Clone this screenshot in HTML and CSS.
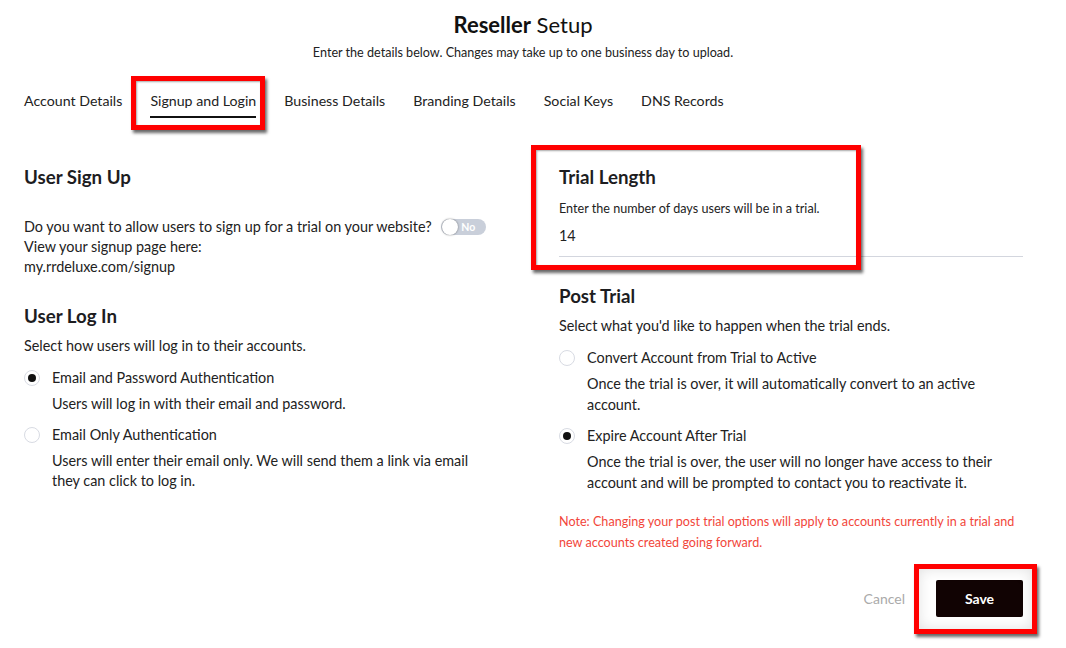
FILE: index.html
```html
<!DOCTYPE html>
<html lang="en">
<head>
  <meta charset="UTF-8">
  <meta name="viewport" content="width=device-width, initial-scale=1.0">
  <title>Reseller Setup</title>
  <link rel="stylesheet" href="styles.css">
</head>
<body>
  <h1 class="title"><b>Reseller</b> Setup</h1>
  <p class="subtitle">Enter the details below. Changes may take up to one business day to upload.</p>

  <nav class="tabs">
    <a class="tab">Account Details</a>
    <a class="tab active">Signup and Login<span class="mark mark-tab"></span></a>
    <a class="tab">Business Details</a>
    <a class="tab">Branding Details</a>
    <a class="tab">Social Keys</a>
    <a class="tab">DNS Records</a>
  </nav>

  <div class="columns">
    <div class="col">
      <h2 class="section-title">User Sign Up</h2>
      <p class="text signup-text">
        Do you want to allow users to sign up for a trial on your website?
        <span class="toggle"><span class="knob"></span><span class="toggle-label">No</span></span><br>
        View your signup page here:<br>
        my.rrdeluxe.com/signup
      </p>

      <h2 class="section-title login-title">User Log In</h2>
      <p class="text hint">Select how users will log in to their accounts.</p>

      <div class="option first">
        <div class="option-row"><span class="radio checked"></span>Email and Password Authentication</div>
        <p class="option-desc">Users will log in with their email and password.</p>
      </div>
      <div class="option">
        <div class="option-row"><span class="radio"></span>Email Only Authentication</div>
        <p class="option-desc">Users will enter their email only. We will send them a link via email they can click to log in.</p>
      </div>
    </div>

    <div class="col right">
      <div class="trial">
        <h2 class="section-title">Trial Length</h2>
        <p class="small">Enter the number of days users will be in a trial.</p>
        <div class="field">14</div>
        <span class="mark mark-trial"></span>
      </div>

      <h2 class="section-title post-title">Post Trial</h2>
      <p class="text hint">Select what you'd like to happen when the trial ends.</p>

      <div class="option first">
        <div class="option-row"><span class="radio"></span>Convert Account from Trial to Active</div>
        <p class="option-desc">Once the trial is over, it will automatically convert to an active account.</p>
      </div>
      <div class="option">
        <div class="option-row"><span class="radio checked"></span>Expire Account After Trial</div>
        <p class="option-desc">Once the trial is over, the user will no longer have access to their account and will be prompted to contact you to reactivate it.</p>
      </div>

      <p class="note">Note: Changing your post trial options will apply to accounts currently in a trial and new accounts created going forward.</p>

      <div class="actions">
        <button class="btn-cancel">Cancel</button>
        <div class="save-wrap">
          <button class="btn-save">Save</button>
          <span class="mark mark-save"></span>
        </div>
      </div>
    </div>
  </div>
</body>
</html>
```

FILE: styles.css
```css
body {
  margin: 0;
  padding-bottom: 30px;
  width: 1046px;
  font-family: Lato, "Open Sans", sans-serif;
  color: #222;
  background: #fff;
}
.title {
  margin: 10px 0 0;
  text-align: center;
  font-size: 22px;
  line-height: 30px;
  font-weight: 400;
  color: #111;
}
.subtitle {
  margin: 5px 0 0;
  text-align: center;
  font-size: 12.6px;
  line-height: 16px;
  color: #222;
}
.tabs {
  display: flex;
  gap: 28px;
  margin-top: 30px;
  padding-left: 24px;
}
.tab {
  position: relative;
  font-size: 14.2px;
  line-height: 20px;
  padding-bottom: 5px;
  border-bottom: 2px solid transparent;
  color: #222;
}
.tab.active {
  border-bottom-color: #111;
}

/* red annotation boxes drawn over the page */
.mark {
  position: absolute;
  border: 5px solid #f00;
  box-shadow: 2px 3px 3px rgba(0, 0, 0, 0.6), inset 1px 1px 2px rgba(0, 0, 0, 0.35);
  pointer-events: none;
}
.mark-tab {
  left: -19px;
  top: -15px;
  width: 124px;
  height: 44px;
}
.mark-trial {
  left: -28px;
  top: -20px;
  width: 320px;
  height: 115px;
}
.save-wrap {
  position: relative;
}
.mark-save {
  left: -22px;
  top: -16px;
  width: 113px;
  height: 60px;
  box-shadow: 2px 3px 3px rgba(0, 0, 0, 0.6), inset 0 0 14px rgba(0, 0, 0, 0.12);
}

.columns {
  display: grid;
  grid-template-columns: 470px 1fr;
  column-gap: 65px;
  padding: 0 23px 0 24px;
  margin-top: 47px;
}
.section-title {
  margin: 0;
  font-size: 18.7px;
  line-height: 24px;
  font-weight: 700;
  color: #1d1d1f;
}
.text {
  margin: 0;
  font-size: 14.4px;
  line-height: 20px;
}
.signup-text {
  margin-top: 28px;
}
.login-title {
  margin-top: 27px;
}
.hint {
  margin-top: 8px;
}
.toggle {
  position: relative;
  display: inline-block;
  vertical-align: -3px;
  width: 45px;
  height: 16px;
  margin-left: 6px;
  border-radius: 8px;
  background: #c9cfda;
}
.knob {
  position: absolute;
  left: 1px;
  top: 0;
  width: 16px;
  height: 16px;
  border-radius: 50%;
  background: #fff;
  box-shadow: 0 0 2px rgba(0, 0, 0, 0.5);
}
.toggle-label {
  position: absolute;
  left: 20px;
  top: 0;
  font-size: 10.5px;
  line-height: 16px;
  font-weight: 700;
  color: #fff;
}
.option {
  margin-top: 11px;
}
.option.first {
  margin-top: 12px;
}
.option-row {
  display: flex;
  align-items: center;
  gap: 12px;
  font-size: 14.4px;
  line-height: 20px;
}
.radio {
  box-sizing: border-box;
  width: 16px;
  height: 16px;
  border-radius: 50%;
  border: 1px solid #d8dbe3;
  background: #fff;
  position: relative;
}
.radio.checked::after {
  content: "";
  position: absolute;
  left: 3px;
  top: 3px;
  width: 8px;
  height: 8px;
  border-radius: 50%;
  background: #111;
}
.option-desc {
  margin: 6px 0 0 28px;
  font-size: 14.4px;
  line-height: 20px;
}
.trial {
  position: relative;
}
.small {
  margin: 12px 0 0;
  font-size: 12.6px;
  line-height: 16px;
}
.field {
  margin-top: 9px;
  padding-bottom: 10px;
  font-size: 14.4px;
  line-height: 20px;
  border-bottom: 1px solid #d3d6de;
}
.post-title {
  margin-top: 27px;
}
.right .option-desc {
  margin-top: 5px;
  line-height: 21px;
}
.right .option + .option {
  margin-top: 11px;
}
.note {
  margin: 18px 0 0;
  font-size: 12.6px;
  line-height: 21px;
  color: #f2463a;
}
.actions {
  display: flex;
  justify-content: flex-end;
  align-items: center;
  gap: 31px;
  margin-top: 27px;
}
.btn-cancel {
  border: 0;
  background: none;
  padding: 0;
  font-family: inherit;
  font-size: 14px;
  color: #aaa;
}
.btn-save {
  display: block;
  width: 87px;
  height: 37px;
  border: 0;
  border-radius: 2px;
  background: #110303;
  color: #fff;
  font-family: inherit;
  font-size: 14px;
  font-weight: 700;
}
```
